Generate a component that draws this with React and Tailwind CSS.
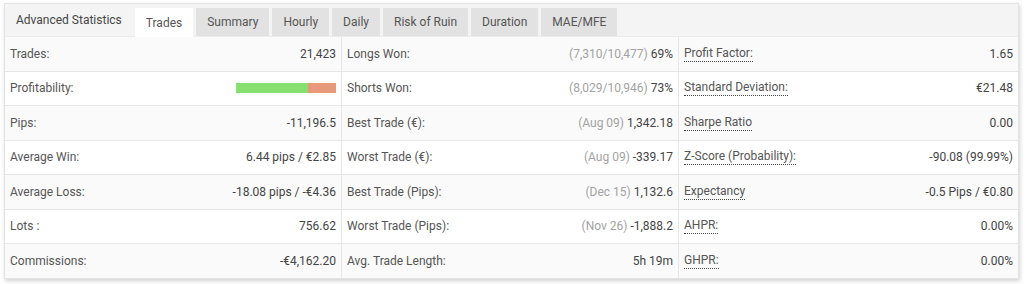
import React from 'react';

const tabs = ['Trades', 'Summary', 'Hourly', 'Daily', 'Risk of Ruin', 'Duration', 'MAE/MFE'];

const rows = [
  [
    { label: 'Trades:', value: '21,423' },
    { label: 'Longs Won:', muted: '(7,310/10,477)', value: '69%' },
    { label: 'Profit Factor:', value: '1.65', dotted: true },
  ],
  [
    { label: 'Profitability:', bar: 72 },
    { label: 'Shorts Won:', muted: '(8,029/10,946)', value: '73%' },
    { label: 'Standard Deviation:', value: '€21.48', dotted: true },
  ],
  [
    { label: 'Pips:', value: '-11,196.5' },
    { label: 'Best Trade (€):', muted: '(Aug 09)', value: '1,342.18' },
    { label: 'Sharpe Ratio', value: '0.00', dotted: true },
  ],
  [
    { label: 'Average Win:', value: '6.44 pips / €2.85' },
    { label: 'Worst Trade (€):', muted: '(Aug 09)', value: '-339.17' },
    { label: 'Z-Score (Probability):', value: '-90.08 (99.99%)', dotted: true },
  ],
  [
    { label: 'Average Loss:', value: '-18.08 pips / -€4.36' },
    { label: 'Best Trade (Pips):', muted: '(Dec 15)', value: '1,132.6' },
    { label: 'Expectancy', value: '-0.5 Pips / €0.80', dotted: true },
  ],
  [
    { label: 'Lots :', value: '756.62' },
    { label: 'Worst Trade (Pips):', muted: '(Nov 26)', value: '-1,888.2' },
    { label: 'AHPR:', value: '0.00%', dotted: true },
  ],
  [
    { label: 'Commissions:', value: '-€4,162.20' },
    { label: 'Avg. Trade Length:', value: '5h 19m' },
    { label: 'GHPR:', value: '0.00%', dotted: true },
  ],
];

const Cell = ({ cell, last }) => (
  <div
    className={`flex items-center justify-between h-[33.5px] px-[5px] ${
      last ? '' : 'border-r border-[#e6e6e6]'
    }`}
  >
    <span
      className={
        cell.dotted
          ? 'text-[#555] leading-[15px] border-b border-dotted border-[#444]'
          : 'text-[#555]'
      }
    >
      {cell.label}
    </span>
    {cell.bar ? (
      <div className="flex w-[100px] h-[10px]">
        <div className="h-full bg-[#86e070]" style={{ width: `${cell.bar}%` }} />
        <div className="h-full flex-1 bg-[#e89a7c]" />
      </div>
    ) : (
      <span className="text-[#444]">
        {cell.muted && <span className="text-[#a3a3a3]">{cell.muted} </span>}
        {cell.value}
      </span>
    )}
  </div>
);

export default function App() {
  return (
    <div className="bg-white w-[1026px] h-[284px] pt-[3px] pl-[4px] font-['Roboto',sans-serif] text-[12px]">
      <div className="w-[1015px] bg-white border border-[#e3e3e3] shadow-[1px_2px_4px_rgba(0,0,0,0.18)]">
        <div className="flex items-end h-[33px] bg-[#f4f4f4] border-b border-[#ececec]">
          <div className="self-center px-[11px] text-[#444]">Advanced Statistics</div>
          <div className="flex gap-[3px] ml-[2px]">
            {tabs.map((t, i) => (
              <div
                key={t}
                className={`flex items-center px-[11px] text-[#555] ${
                  i === 0 ? 'bg-white -mb-px h-[29px]' : 'bg-[#e2e2e2] h-[28px]'
                }`}
              >
                {t}
              </div>
            ))}
          </div>
        </div>
        {rows.map((row, r) => (
          <div
            key={r}
            className={`grid grid-cols-[337px_337px_1fr] ${
              r < rows.length - 1 ? 'border-b border-[#e6e6e6]' : ''
            } ${r % 2 === 0 ? 'bg-[#fafafa]' : 'bg-white'}`}
          >
            {row.map((cell, c) => (
              <Cell key={c} cell={cell} last={c === 2} />
            ))}
          </div>
        ))}
      </div>
    </div>
  );
}
